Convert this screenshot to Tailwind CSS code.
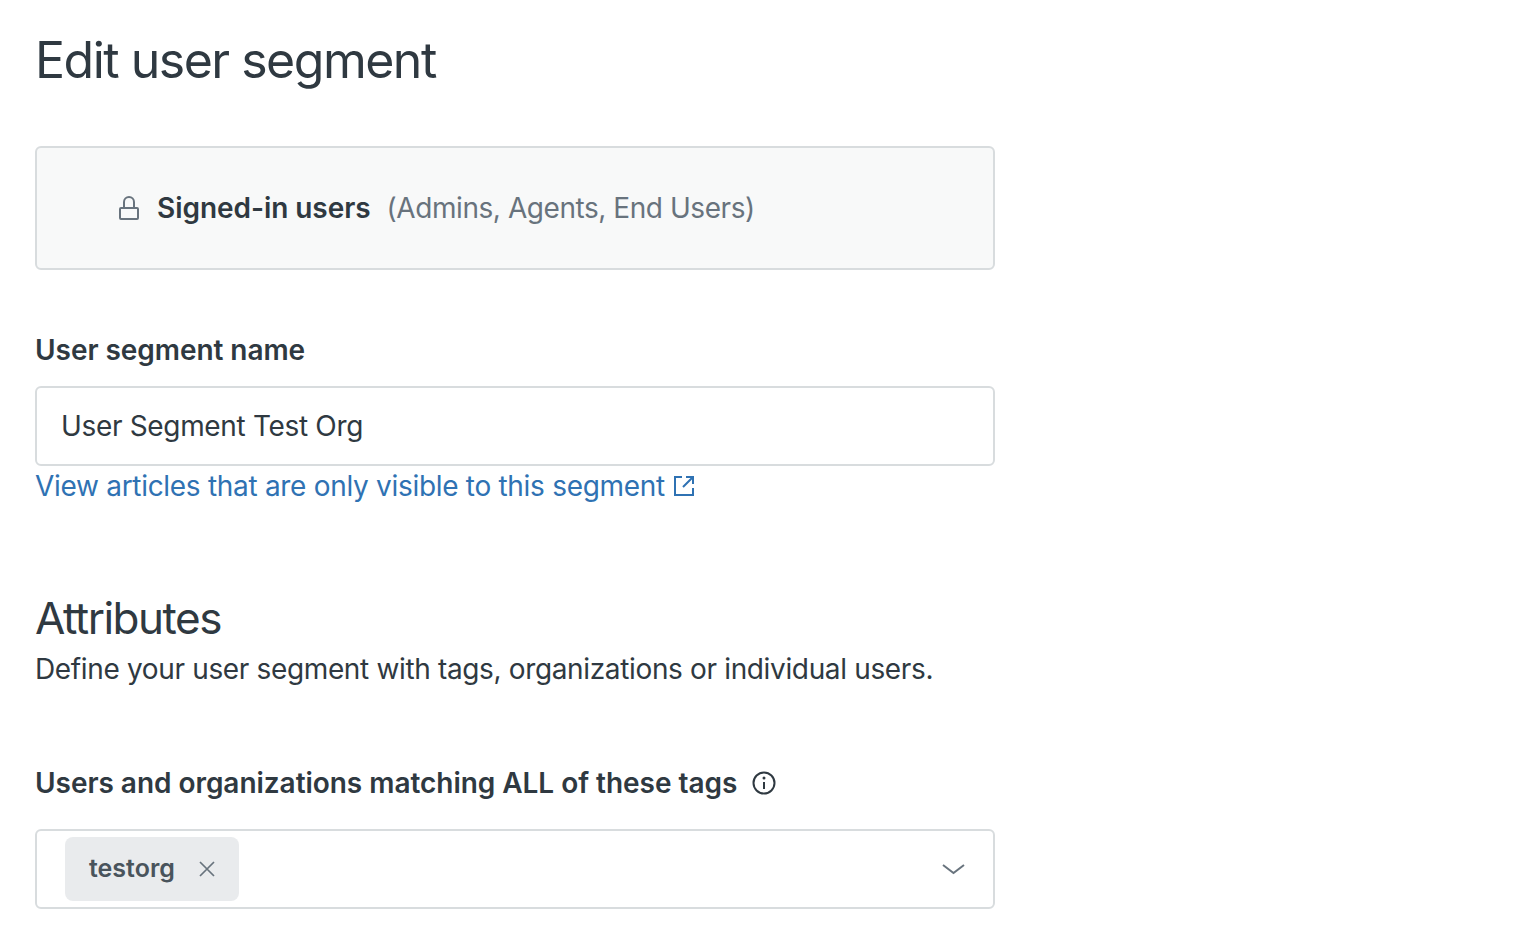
<!DOCTYPE html>
<html lang="en">
<head>
    <meta charset="UTF-8">
    <title>Edit user segment</title>
    <script src="https://cdn.jsdelivr.net/npm/@tailwindcss/browser@4"></script>
</head>
<body class="bg-white text-[#2f3941] font-['Inter',sans-serif] overflow-hidden h-[946px]">
    <div class="w-[960px] ml-[35px]">
        <h1 class="pt-[30px] text-[50px] leading-[60px] tracking-[-1.5px]">Edit user segment</h1>

        <!-- Signed-in banner -->
        <div class="mt-[56px] h-[124px] flex items-center pl-[80px] bg-[#f8f9f9] border-2 border-[#d8dcde] rounded-[6px] text-[28px]">
            <svg class="w-6 h-6 text-[#68737d]" viewBox="0 0 24 24" fill="none" stroke="currentColor" stroke-width="2"><rect x="3" y="12" width="18" height="11" rx="1"/><path d="M7 12V6a5 5 0 0 1 10 0v6"/></svg>
            <span class="ml-4 font-semibold tracking-[-0.05px]">Signed-in users</span>
            <span class="ml-4 text-[#68737d] tracking-[-0.44px]">(Admins, Agents, End Users)</span>
        </div>

        <label class="block mt-[60px] text-[28px] leading-[40px] font-semibold tracking-[-0.05px]">User segment name</label>
        <div class="mt-4 h-[80px] flex items-center px-6 border-2 border-[#d8dcde] rounded-[6px] text-[28px] tracking-[-0.33px]">User Segment Test Org</div>
        <a class="flex items-center gap-[7px] h-[40px] text-[28px] text-[#2f72b3] tracking-[-0.3px]">View articles that are only visible to this segment
            <svg class="w-6 h-6" viewBox="0 0 24 24" fill="none" stroke="currentColor" stroke-width="2"><path d="M10 3H3v18h18v-7M14 3h7v7M21 3 11 13"/></svg>
        </a>

        <h2 class="mt-[87px] text-[44px] leading-[50px] tracking-[-1.5px]">Attributes</h2>
        <p class="mt-[6px] text-[28px] leading-[40px] tracking-[-0.35px]">Define your user segment with tags, organizations or individual users.</p>

        <div class="flex items-center gap-[15px] mt-[74px]">
            <label class="text-[28px] leading-[40px] font-semibold tracking-[-0.04px]">Users and organizations matching ALL of these tags</label>
            <svg class="w-6 h-6" viewBox="0 0 24 24" fill="none" stroke="currentColor" stroke-width="2"><circle cx="12" cy="12" r="10.5"/><path d="M12 11v7"/><circle cx="12" cy="7" r="1.5" fill="currentColor" stroke="none"/></svg>
        </div>
        <div class="mt-[26px] h-[80px] flex items-center justify-between pl-7 pr-7 border-2 border-[#d8dcde] rounded-[6px]">
            <span class="flex items-center gap-[24px] h-[64px] pl-6 pr-[24px] bg-[#e9ebed] rounded-[8px] text-[25px] font-semibold text-[#49545c]">testorg
                <svg class="w-4 h-4 text-[#68737d]" viewBox="0 0 16 16" stroke="currentColor" stroke-width="1.7"><path d="m1 1 14 14M15 1 1 15"/></svg>
            </span>
            <svg class="w-6 h-6 text-[#68737d]" viewBox="0 0 24 24" fill="none" stroke="currentColor" stroke-width="2"><path d="m2 8 10.5 8L23 8"/></svg>
        </div>
    </div>
</body>
</html>
